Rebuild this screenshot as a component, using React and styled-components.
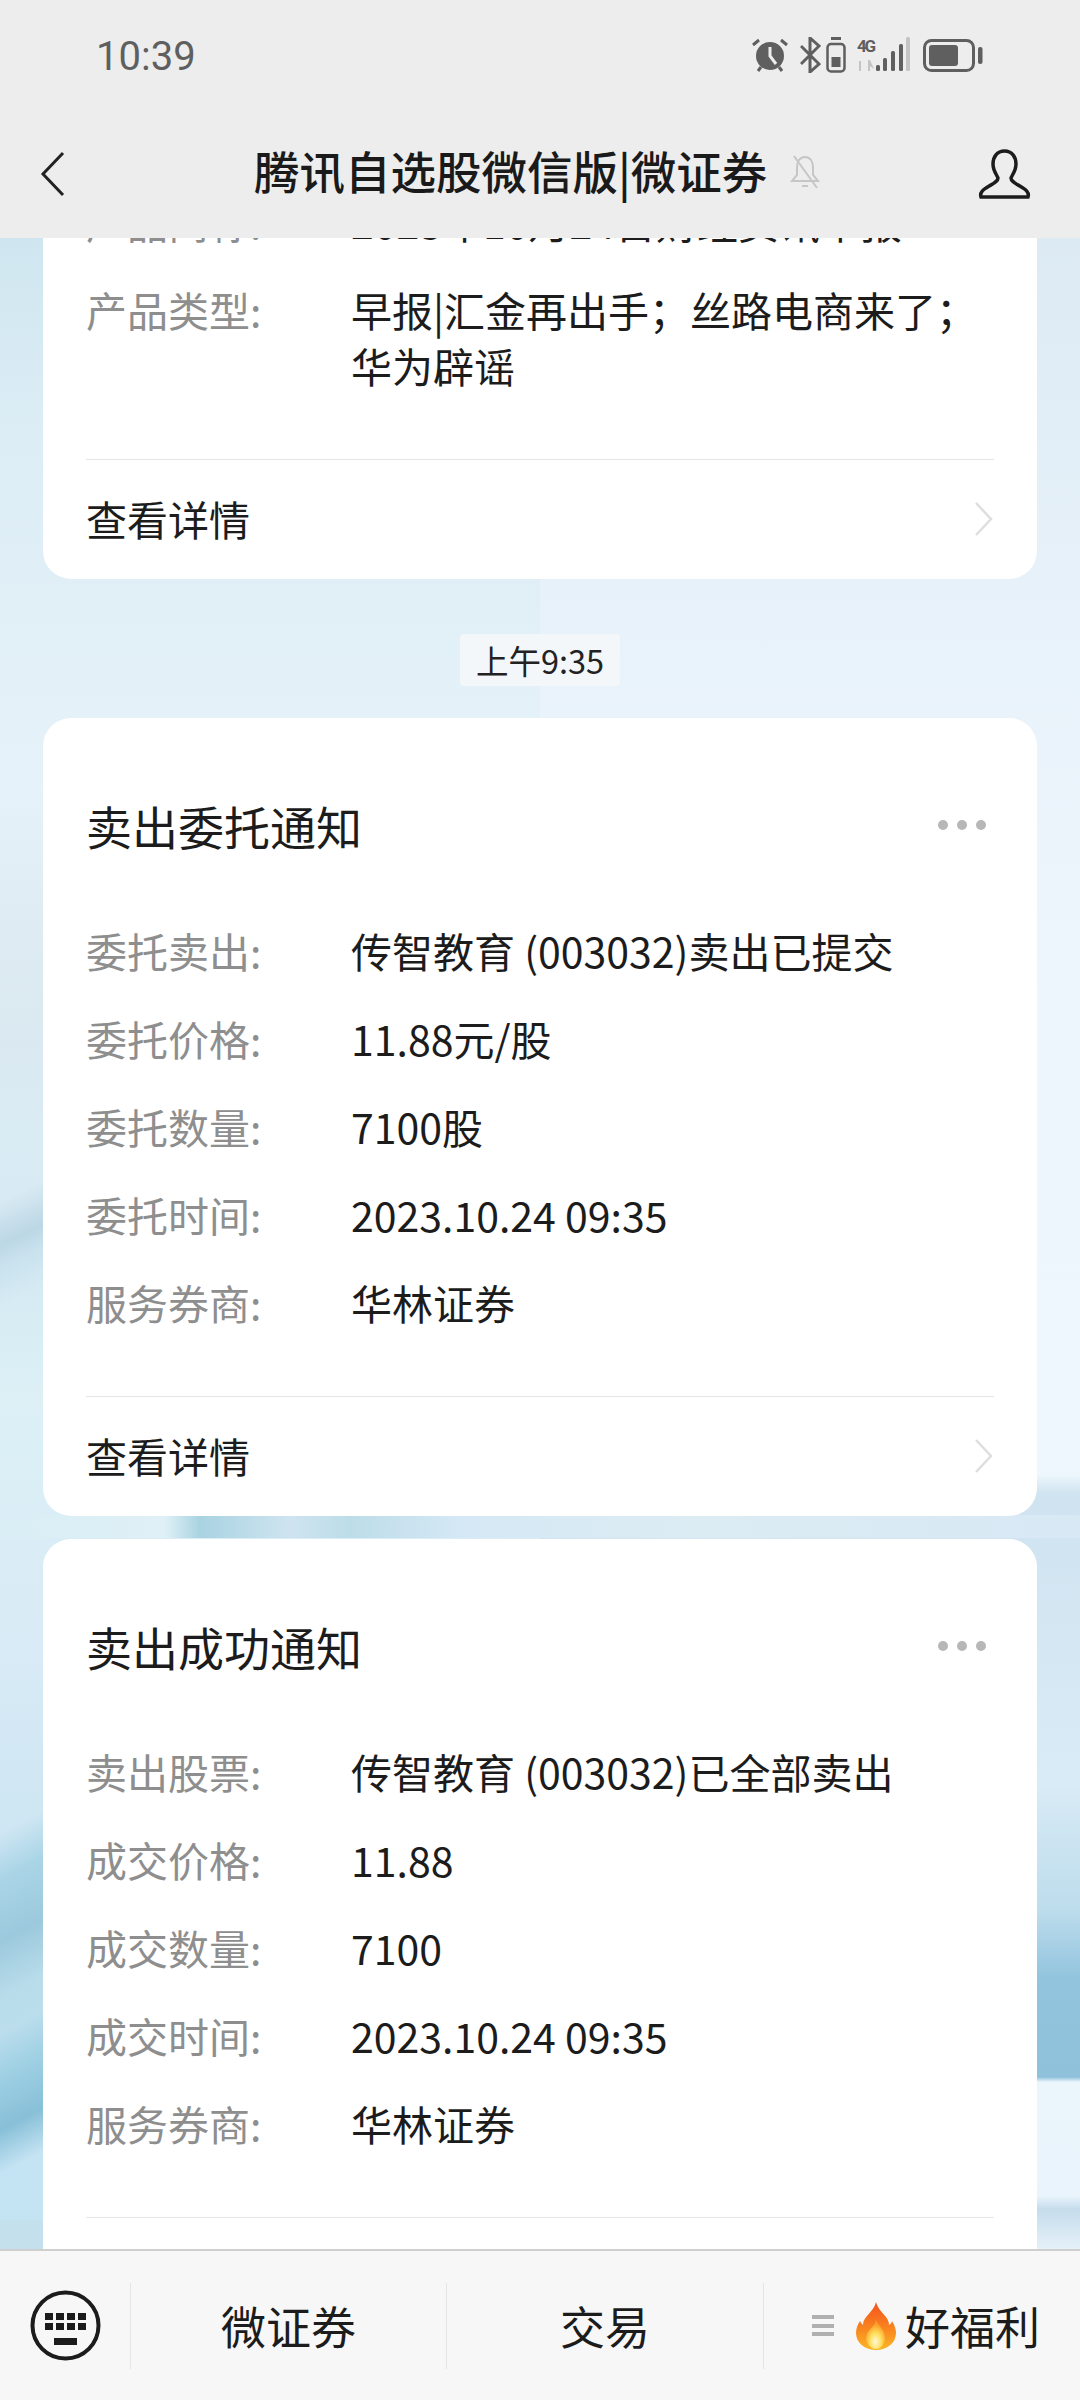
import React from 'react';
import styled, { createGlobalStyle } from 'styled-components';

const GlobalStyle = createGlobalStyle`
  html, body {
    margin: 0;
    padding: 0;
    background: #ededed;
  }
  body {
    font-family: "Noto Sans CJK SC", "Noto Sans", sans-serif;
    color: #1c1c1c;
    overflow: hidden;
  }
`;

const Screen = styled.div`
  width: 1080px;
  height: 2400px;
  display: flex;
  flex-direction: column;
  overflow: hidden;
`;

const Header = styled.header`
  flex: none;
  background: #ededed;
  position: relative;
  z-index: 1;
`;

const StatusBar = styled.div`
  height: 110px;
  padding: 0 97px 0 98px;
  display: flex;
  align-items: center;
  justify-content: space-between;
`;

const Clock = styled.span`
  font-family: Roboto, sans-serif;
  font-size: 40px;
  line-height: 1;
  color: #5f5f5f;
  margin: 3px 0 0 -2px;
`;

const StatusIcons = styled.div`
  display: flex;
  align-items: center;
`;

const NavBar = styled.nav`
  height: 128px;
  padding: 0 49px 0 40px;
  display: grid;
  grid-template-columns: 25px 1fr 53px;
  align-items: center;
`;

const NavTitleGroup = styled.div`
  display: flex;
  align-items: center;
  gap: 22px;
  padding: 0 0 5px 189px;
`;

const NavTitle = styled.h1`
  margin: 0 0 3px;
  font-size: 45.500px;
  line-height: 60px;
  font-weight: 500;
  color: #1a1a1a;
  white-space: nowrap;
`;

// wallpaper: soft blue streaks down each screen side, plus the streak seen between the last two cards
const Feed = styled.main`
  flex: 1;
  min-height: 0;
  overflow: hidden;
  background-repeat: no-repeat;
  background-size: 100% 23px, 43px 200px, 43px 420px, 50% 100%, 50% 100%;
  background-position: 0 1277px, 0 897px, 0 1562px, 0 0, 100% 0;
  background-image:
    linear-gradient(90deg, #d9eef5 0, #dff0f6 165px, #a9d3e1 200px, #cfe4f0 290px, #bcdde8 350px, #d5e8f5 460px, #dcecf3 700px, #d8e8f5 1080px),
    linear-gradient(155deg, transparent 30%, #bcd7e5 50%, #c9e2ee 60%, transparent 78%),
    linear-gradient(152deg, #cfe6f3 30px, #aad5e7 70px, #9cc9dd 125px, #b8dcea 175px, #bcdeec 205px, #9fd0e4 245px, #88c0d8 292px, #c4e3f3 330px),
    linear-gradient(180deg, #cfe6f0 0, #dcedf5 193px, #e6f2f9 554px, #dfecf3 670px, #dbe9f1 773px, #d9ebf3 902px, #d6eaf3 1050px, #dcf0f6 1159px, #d8ebf6 1417px, #cfe6f3 1562px, #c4e3f3 1900px, #c4e0ec 2012px),
    linear-gradient(180deg, #dceaf4 0, #e8f2fa 386px, #eef6fd 773px, #eef7fd 1236px, #cfe3f0 1256px, #d9ebf6 1546px, #bcdcec 1674px, #93c4de 1739px, #8fc1da 1839px, #eaf5fc 1844px, #eaf4fc 1958px, #c5dcec 1971px, #e6f1f9 2012px);
`;

const Messages = styled.div`
  margin-top: -45px;
  padding: 0 43px;
  display: flex;
  flex-direction: column;
`;

const Card = styled.section`
  background: #fff;
  border-radius: 28px;
  padding: ${props => (props.$continued ? '0 43px' : '77px 43px 0')};
  margin-top: ${props => props.$gap || 0}px;
`;

const CardHead = styled.div`
  display: flex;
  justify-content: space-between;
  align-items: center;
  margin-bottom: 67px;
`;

const CardTitle = styled.h2`
  margin: 0;
  font-size: 46px;
  line-height: 60px;
  font-weight: 400;
`;

const MoreDots = styled.div`
  display: flex;
  gap: 9px;
  margin-right: 8px;

  span {
    width: 10px;
    height: 10px;
    border-radius: 50%;
    background: #b7b7b7;
  }
`;

const Rows = styled.dl`
  margin: 0 0 66px;
  display: flex;
  flex-direction: column;
  gap: 32px;
`;

const Row = styled.div`
  display: grid;
  grid-template-columns: 265px 1fr;
`;

const Label = styled.dt`
  font-size: 41px;
  line-height: 56px;
  color: #8e8e8e;
`;

const Value = styled.dd`
  margin: 0;
  font-size: 41px;
  line-height: 56px;
  color: #1c1c1c;
`;

const Details = styled.div`
  height: 118px;
  box-sizing: content-box;
  padding: 0 1px 1px 0;
  border-top: 1px solid #e6e6e6;
  display: flex;
  align-items: center;
  justify-content: space-between;
  font-size: 41px;
  line-height: 56px;
  color: #1c1c1c;
`;

const DetailsText = styled.span`
  margin-bottom: 3px;
`;

const TimeChip = styled.div`
  align-self: center;
  margin: 55px 0 32px;
  width: 160px;
  height: 52px;
  border-radius: 4px;
  background: #f3f7fa;
  font-size: 32.500px;
  line-height: 52px;
  text-align: center;
  color: #222;
`;

const BottomBar = styled.footer`
  flex: none;
  height: 151px;
  box-sizing: border-box;
  border-top: 2px solid #cfcfcf;
  background: #f7f7f7;
  display: grid;
  grid-template-columns: 130px 316px 317px 1fr;
  align-items: center;
  position: relative;
  z-index: 1;
`;

const KeyboardButton = styled.div`
  display: flex;
  justify-content: center;
  padding-left: 1px;
`;

const MenuTab = styled.div`
  height: 86px;
  border-left: 1px solid #e4e4e4;
  display: flex;
  align-items: center;
  justify-content: center;
  gap: ${props => props.$gap || 0}px;
  padding-left: ${props => props.$inset || 0}px;
  font-size: 45px;
  color: #1c1c1c;
`;

const MenuLines = styled.div`
  width: 22px;
  height: 21px;
  margin-right: 13px;
  display: flex;
  flex-direction: column;
  justify-content: space-between;

  span {
    height: 4px;
    background: #b0b0b0;
  }
`;

const AlarmIcon = () => (
  <svg width="36" height="34" viewBox="0 0 36 34" fill="none">
    <circle cx="18" cy="18" r="14" fill="#5f5f5f" />
    <path d="M18 9v9l6 8" stroke="#ededed" strokeWidth="3" />
    <path d="M1 7l6-5M35 7l-6-5M6 33l3-4M30 33l-3-4" stroke="#5f5f5f" strokeWidth="3" />
  </svg>
);

const BluetoothIcon = () => (
  <svg width="21" height="36" viewBox="0 0 21 36" fill="none" style={{ marginLeft: 12 }}>
    <path d="M1 9l18 18-9 8V1l9 8L1 27" stroke="#5f5f5f" strokeWidth="3" />
  </svg>
);

const BudsIcon = () => (
  <svg width="20" height="36" viewBox="0 0 20 36" fill="none" style={{ marginLeft: 5 }}>
    <path d="M5 1.500h10" stroke="#5f5f5f" strokeWidth="3" />
    <rect x="1.500" y="7" width="17" height="27.500" rx="3.500" stroke="#5f5f5f" strokeWidth="2.500" />
    <rect x="5.500" y="20" width="9" height="10" fill="#5f5f5f" />
  </svg>
);

const SignalIcon = () => (
  <svg width="54" height="36" viewBox="0 0 54 36" style={{ marginLeft: 11 }}>
    <text x="0" y="15" fontFamily="Roboto, sans-serif" fontSize="17" fontWeight="700" fill="#5f5f5f" textLength="19">4G</text>
    <path d="M2 24h2v10H2zM11 23v11h2v-5l4 3-4-9z" fill="#c4c4c4" />
    <rect x="19" y="28" width="4" height="6" rx="1.500" fill="#5f5f5f" />
    <rect x="26" y="21" width="4" height="13" rx="1.500" fill="#5f5f5f" />
    <rect x="34" y="14" width="4" height="20" rx="1.500" fill="#5f5f5f" />
    <rect x="42" y="7" width="4" height="27" rx="1.500" fill="#5f5f5f" />
    <rect x="49" y="0" width="4" height="34" rx="1.500" fill="#c4c4c4" />
  </svg>
);

const BatteryIcon = () => (
  <svg width="60" height="33" viewBox="0 0 60 33" fill="none" style={{ marginLeft: 12 }}>
    <rect x="1.500" y="1.500" width="49" height="30" rx="7" stroke="#5f5f5f" strokeWidth="3" />
    <rect x="6" y="6" width="29" height="21" rx="3" fill="#5f5f5f" />
    <rect x="55" y="8" width="4.500" height="17" rx="2" fill="#5f5f5f" />
  </svg>
);

const BackIcon = () => (
  <svg width="25" height="46" viewBox="0 0 25 46" fill="none">
    <path d="M23 2L3 23l20 21" stroke="#222" strokeWidth="3" />
  </svg>
);

const MutedBellIcon = () => (
  <svg width="32" height="36" viewBox="0 0 32 36" fill="none" stroke="#c6c6c6" strokeWidth="2">
    <path d="M16 3c-6 0-8 6-8 11v7l-5 6h26l-5-6v-7c0-5-2-11-8-11z" />
    <path d="M13 32h6M5 2l23 32" />
  </svg>
);

const UserIcon = () => (
  <svg width="53" height="50" viewBox="0 0 53 50" fill="none">
    <path
      d="M26.500 2C19 2 15 8 15 15c0 7 4 11 5 14 0 4-6 6-12 10-5 3-6 6-5 9h47c1-3 0-6-5-9-6-4-12-6-12-10 1-3 5-7 5-14 0-7-4-13-11.500-13z"
      stroke="#1c1c1c"
      strokeWidth="3.500"
    />
  </svg>
);

const DetailChevron = () => (
  <svg width="19" height="34" viewBox="0 0 19 34" fill="none">
    <path d="M2 1l15 16L2 33" stroke="#dedede" strokeWidth="2.500" />
  </svg>
);

const KeyboardIcon = () => (
  <svg width="71" height="71" viewBox="0 0 71 71" fill="#1c1c1c">
    <circle cx="35.500" cy="35.500" r="33" fill="none" stroke="#1c1c1c" strokeWidth="4" />
    {[15, 26, 37, 48].map(x =>
      [23, 33].map(y => <rect key={`${x}-${y}`} x={x} y={y} width="8" height="7" />)
    )}
    <rect x="24" y="48" width="23" height="7" />
  </svg>
);

const FlameIcon = () => (
  <svg width="40" height="48" viewBox="0 0 40 48">
    <defs>
      <linearGradient id="flameOuter" x1="0" y1="0" x2="0" y2="1">
        <stop offset="0" stopColor="#f4511e" />
        <stop offset="0.6" stopColor="#f98a1f" />
        <stop offset="1" stopColor="#fbb726" />
      </linearGradient>
      <radialGradient id="flameCore" cx="0.5" cy="0.75" r="0.6">
        <stop offset="0" stopColor="#fff9d8" />
        <stop offset="0.5" stopColor="#ffdf5e" />
        <stop offset="1" stopColor="#fb9d26" />
      </radialGradient>
    </defs>
    <path
      d="M20 0c2 7 6 10 10 15 2 3 3 5 3 8 2-1 3-3 3-4 3 5 4 9 4 12 0 10-9 17-20 17S0 41 0 31c0-5 2-9 4-12 1 2 2 3 3 4 0-9 11-13 13-23z"
      fill="url(#flameOuter)"
    />
    <path d="M20 18c1 4 9 9 9 18 0 6-4 11-9 11s-10-5-10-11c0-8 9-11 10-18z" fill="url(#flameCore)" />
  </svg>
);

const sellOrder = [
  ['委托卖出:', '传智教育 (003032)卖出已提交'],
  ['委托价格:', '11.88元/股'],
  ['委托数量:', '7100股'],
  ['委托时间:', '2023.10.24 09:35'],
  ['服务券商:', '华林证券'],
];

const sellDone = [
  ['卖出股票:', '传智教育 (003032)已全部卖出'],
  ['成交价格:', '11.88'],
  ['成交数量:', '7100'],
  ['成交时间:', '2023.10.24 09:35'],
  ['服务券商:', '华林证券'],
];

const morningReport = [
  ['产品简称:', '2023年10月24日财经资讯早报'],
  ['产品类型:', '早报|汇金再出手\uFF1B丝路电商来了\uFF1B华为辟谣'],
];

const InfoRows = ({ rows }) => (
  <Rows>
    {rows.map(([label, value]) => (
      <Row key={label}>
        <Label>{label}</Label>
        <Value>{value}</Value>
      </Row>
    ))}
  </Rows>
);

const DetailsLink = () => (
  <Details>
    <DetailsText>查看详情</DetailsText>
    <DetailChevron />
  </Details>
);

const NoticeCard = ({ title, rows, gap }) => (
  <Card $gap={gap}>
    <CardHead>
      <CardTitle>{title}</CardTitle>
      <MoreDots>
        <span />
        <span />
        <span />
      </MoreDots>
    </CardHead>
    <InfoRows rows={rows} />
    <DetailsLink />
  </Card>
);

export default function App() {
  return (
    <Screen>
      <GlobalStyle />
      <Header>
        <StatusBar>
          <Clock>10:39</Clock>
          <StatusIcons>
            <AlarmIcon />
            <BluetoothIcon />
            <BudsIcon />
            <SignalIcon />
            <BatteryIcon />
          </StatusIcons>
        </StatusBar>
        <NavBar>
          <BackIcon />
          <NavTitleGroup>
            <NavTitle>腾讯自选股微信版|微证券</NavTitle>
            <MutedBellIcon />
          </NavTitleGroup>
          <UserIcon />
        </NavBar>
      </Header>

      <Feed>
        <Messages>
          <Card $continued>
            <InfoRows rows={morningReport} />
            <DetailsLink />
          </Card>
          <TimeChip>上午9:35</TimeChip>
          <NoticeCard title="卖出委托通知" rows={sellOrder} />
          <NoticeCard title="卖出成功通知" rows={sellDone} gap={23} />
        </Messages>
      </Feed>

      <BottomBar>
        <KeyboardButton>
          <KeyboardIcon />
        </KeyboardButton>
        <MenuTab>微证券</MenuTab>
        <MenuTab>交易</MenuTab>
        <MenuTab $gap={9} $inset={8}>
          <MenuLines>
            <span />
            <span />
            <span />
          </MenuLines>
          <FlameIcon />
          好福利
        </MenuTab>
      </BottomBar>
    </Screen>
  );
}
